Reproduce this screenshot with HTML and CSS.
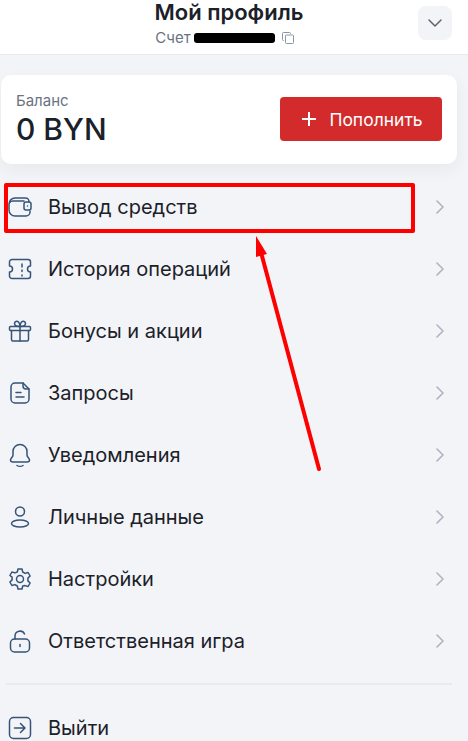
FILE: index.html
```html
<!DOCTYPE html>
<html lang="ru">
  <head>
    <meta charset="utf-8">
    <title>Мой профиль</title>
    <link rel="stylesheet" href="styles.css">
  </head>
  <body>
    <div class="page">
      <header class="top">
        <h1 class="title">Мой профиль</h1>
        <div class="account">
          <span>Счет</span><span class="blackout"></span>
          <svg class="copy" viewBox="0 0 14 14" fill="none" stroke="#8d95a3" stroke-width="1"><path d="M3 9.500H2.500a1 1 0 0 1-1-1v-6a1 1 0 0 1 1-1h6a1 1 0 0 1 1 1V3"/><rect x="4.500" y="4" width="8" height="8.500" rx="1"/></svg>
        </div>
        <button class="collapse">
          <svg viewBox="0 0 16 16" fill="none" stroke="#5b6472" stroke-width="1.5" stroke-linecap="round" stroke-linejoin="round"><path d="M2 5l6 6 6-6"/></svg>
        </button>
      </header>

      <section class="balance">
        <div>
          <div class="balance-label">Баланс</div>
          <div class="balance-sum">0 BYN</div>
        </div>
        <button class="topup">
          <svg class="plus" viewBox="0 0 14 14" stroke="#fff" stroke-width="2"><path d="M7 0v14M0 7h14"/></svg>
          Пополнить
        </button>
      </section>

      <nav class="menu">
        <a class="row">
          <svg class="ico" viewBox="0 0 24 24"><path d="M21 7V6.500A3.500 3.500 0 0 0 17.500 3H7a6 6 0 0 0-6 6v6a6 6 0 0 0 6 6h11a4 4 0 0 0 4-4v-1"/><path d="M1.500 8c.5-1.500 2-2 3.500-2h11"/><rect x="16" y="7" width="7" height="8" rx="2"/><path d="M19.500 11h.01"/></svg>
          <span class="row-text">Вывод средств</span>
          <svg class="arrow" viewBox="0 0 8 14"><path d="M1 1l6 6-6 6"/></svg>
        </a>
        <a class="row">
          <svg class="ico" viewBox="0 0 24 24"><path d="M4 2.500h16A2.500 2.500 0 0 1 22.500 5v4a3 3 0 0 0 0 6v4a2.500 2.500 0 0 1-2.500 2.500H4A2.500 2.500 0 0 1 1.500 19v-4a3 3 0 0 0 0-6V5A2.500 2.500 0 0 1 4 2.500z"/><path d="M14 7v3M14 13v1.500M14 18v1"/></svg>
          <span class="row-text">История операций</span>
          <svg class="arrow" viewBox="0 0 8 14"><path d="M1 1l6 6-6 6"/></svg>
        </a>
        <a class="row">
          <svg class="ico" viewBox="0 0 24 24"><rect x="1.500" y="7.500" width="21" height="4" rx="1"/><path d="M3.500 11.500v9a1.500 1.500 0 0 0 1.500 1.500h14a1.500 1.500 0 0 0 1.500-1.500v-9"/><path d="M12 7.500V22"/><path d="M12 7.500C9 7.500 6.500 6.500 6.500 4.500S9 1.500 10.500 3 12 7.500 12 7.500zM12 7.500c3 0 5.500-1 5.500-3S15 1.500 13.500 3 12 7.500 12 7.500z"/></svg>
          <span class="row-text">Бонусы и акции</span>
          <svg class="arrow" viewBox="0 0 8 14"><path d="M1 1l6 6-6 6"/></svg>
        </a>
        <a class="row">
          <svg class="ico" viewBox="0 0 24 24"><path d="M15 2H7a4 4 0 0 0-4 4v12a4 4 0 0 0 4 4h10a4 4 0 0 0 4-4V8z"/><path d="M15 2v3a3 3 0 0 0 3 3h3"/><path d="M8 11.500h5M8 16h8"/></svg>
          <span class="row-text">Запросы</span>
          <svg class="arrow" viewBox="0 0 8 14"><path d="M1 1l6 6-6 6"/></svg>
        </a>
        <a class="row">
          <svg class="ico" viewBox="0 0 24 24"><path d="M12 1.500a7 7 0 0 0-7 7v3.500c0 2.500-2.500 3-2.500 5 0 1.500 1 2 2.500 2h14c1.500 0 2.500-.5 2.500-2 0-2-2.500-2.500-2.500-5V8.500a7 7 0 0 0-7-7z"/><path d="M9 22.500c1.500 1 4.500 1 6 0"/></svg>
          <span class="row-text">Уведомления</span>
          <svg class="arrow" viewBox="0 0 8 14"><path d="M1 1l6 6-6 6"/></svg>
        </a>
        <a class="row">
          <svg class="ico" viewBox="0 0 24 24"><circle cx="12" cy="6.500" r="4.500"/><ellipse cx="12" cy="18.500" rx="8.500" ry="3.500"/></svg>
          <span class="row-text">Личные данные</span>
          <svg class="arrow" viewBox="0 0 8 14"><path d="M1 1l6 6-6 6"/></svg>
        </a>
        <a class="row">
          <svg class="ico" viewBox="0 0 24 24"><circle cx="12" cy="12" r="3.500"/><path d="M10 2h4l.7 3 2.400 1.400 3-.9 2 3.500-2.200 2.100v2.800l2.200 2.100-2 3.500-3-.9L14.700 19l-.7 3h-4l-.7-3-2.400-1.400-3 .9-2-3.500 2.200-2.100v-2.800L1.900 8.500l2-3.500 3 .9L9.300 5z"/></svg>
          <span class="row-text">Настройки</span>
          <svg class="arrow" viewBox="0 0 8 14"><path d="M1 1l6 6-6 6"/></svg>
        </a>
        <a class="row">
          <svg class="ico" viewBox="0 0 24 24"><rect x="2.500" y="10" width="19" height="13" rx="4"/><path d="M7 10V7a5 5 0 0 1 9.500-2"/><path d="M12 15.500v2"/></svg>
          <span class="row-text">Ответственная игра</span>
          <svg class="arrow" viewBox="0 0 8 14"><path d="M1 1l6 6-6 6"/></svg>
        </a>
      </nav>

      <div class="divider"></div>

      <a class="row">
        <svg class="ico" viewBox="0 0 24 24"><rect x="1.500" y="1.500" width="21" height="21" rx="4"/><path d="M6.500 12h10M12.500 7.500L17 12l-4.500 4.500"/></svg>
        <span class="row-text">Выйти</span>
      </a>

      <!-- annotation drawn over the screenshot -->
      <div class="mark"></div>
      <svg class="pointer" viewBox="0 0 468 741">
        <path d="M319 469L262 256" stroke="#ff0000" stroke-width="4" stroke-linecap="round"/>
        <path d="M256 236l11 18-11 3z" fill="#ff0000"/>
      </svg>
    </div>
  </body>
</html>
```

FILE: styles.css
```css
* {
  box-sizing: border-box;
}
html, body {
  margin: 0;
  height: 100%;
}
body {
  background-color: #f3f4f7;
  font-family: Inter, "Noto Sans", sans-serif;
  color: #1b2129;
  overflow: hidden;
}
.page {
  position: relative;
  height: 741px;
  overflow: hidden;
}
.top {
  position: relative;
  height: 55px;
  background-color: #fff;
  border-bottom: 1px solid #e9eaee;
  text-align: center;
}
.title {
  margin: 0;
  padding-right: 10px;
  font-size: 22px;
  line-height: 25px;
  font-weight: 600;
}
.account {
  display: flex;
  justify-content: center;
  align-items: center;
  padding-right: 18px;
  height: 25px;
  font-size: 15px;
  color: #6a7280;
}
.blackout {
  display: inline-block;
  width: 81px;
  height: 10px;
  margin-left: 3px;
  background-color: #000;
  border-radius: 3px;
}
.copy {
  width: 14px;
  height: 14px;
  margin-left: 6px;
}
.collapse {
  position: absolute;
  top: 6px;
  right: 16px;
  width: 34px;
  height: 34px;
  padding: 9px;
  border: none;
  border-radius: 8px;
  background-color: #f3f4f7;
}
.collapse svg {
  display: block;
  width: 16px;
  height: 16px;
}
.balance {
  display: flex;
  justify-content: space-between;
  align-items: flex-start;
  width: 456px;
  height: 89px;
  margin: 20px 0 12px 1px;
  padding: 16px 15px 0;
  background-color: #fff;
  border-radius: 10px;
  box-shadow: 0 6px 16px rgba(30, 40, 60, 0.05);
}
.balance-label {
  font-size: 15px;
  line-height: 20px;
  color: #6a7280;
}
.balance-sum {
  font-size: 30px;
  line-height: 36px;
  font-weight: 500;
}
.topup {
  display: flex;
  justify-content: center;
  align-items: center;
  width: 162px;
  height: 44px;
  margin-top: 6px;
  padding: 0 0 0 3px;
  border: none;
  border-radius: 4px;
  background-color: #d32b2b;
  color: #fff;
  font-family: inherit;
  font-size: 17.500px;
}
.plus {
  width: 14px;
  height: 14px;
  margin-right: 13px;
}
.row {
  display: flex;
  align-items: center;
  height: 62px;
  padding-left: 8px;
  padding-right: 24px;
}
.ico {
  flex: none;
  width: 24px;
  height: 24px;
  fill: none;
  stroke: #36537a;
  stroke-width: 1.5;
  stroke-linecap: round;
  stroke-linejoin: round;
}
.row-text {
  flex: 1;
  margin-left: 16px;
  font-size: 20px;
}
.arrow {
  flex: none;
  width: 8px;
  height: 14px;
  fill: none;
  stroke: #aeb4c0;
  stroke-width: 1.6;
  stroke-linecap: round;
  stroke-linejoin: round;
}
.divider {
  height: 2px;
  margin: 11px 16px 12px 6px;
  background-color: #e9eaee;
}
.mark {
  position: absolute;
  left: 4px;
  top: 183px;
  width: 411px;
  height: 50px;
  border: 4px solid #ff0000;
  border-radius: 2px;
}
.pointer {
  position: absolute;
  left: 0;
  top: 0;
  width: 468px;
  height: 741px;
}
```
